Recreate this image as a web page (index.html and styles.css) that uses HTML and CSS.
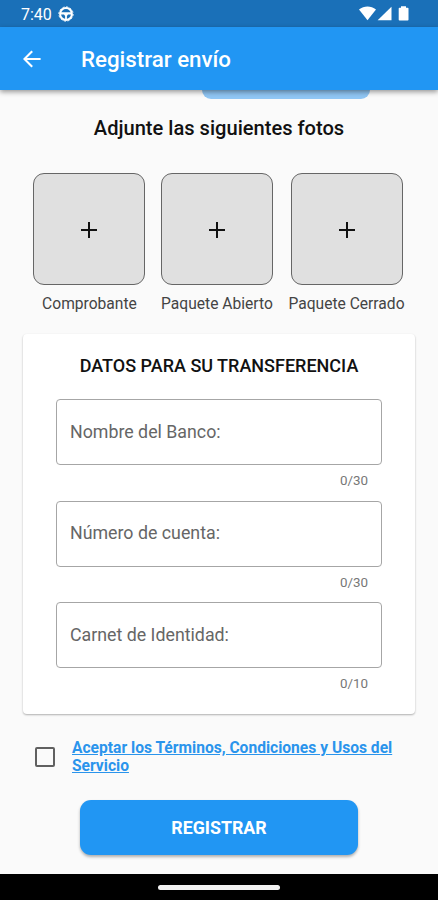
FILE: index.html
```html
<!DOCTYPE html>
<html lang="es">
<head>
    <meta charset="UTF-8">
    <meta name="viewport" content="width=device-width, initial-scale=1.0">
    <title>Registrar envío</title>
    <link rel="stylesheet" href="styles.css">
</head>
<body>
    <div class="status-bar">
        <span class="time">7:40</span>
        <svg class="wheel" width="16" height="16" viewBox="0 0 16 16">
            <circle cx="8" cy="8" r="5.9" fill="none" stroke="#fff" stroke-width="2"/>
            <circle cx="8" cy="8" r="7.1" fill="none" stroke="#fff" stroke-width="1" stroke-dasharray="2.2 1.5"/>
            <path d="M2.5 6.3h11v2.2H10L8.9 10v3.5H7.1V10L6 8.5H2.5z" fill="#fff"/>
        </svg>
        <svg class="signals" width="50" height="16" viewBox="0 0 50 16">
            <path d="M0 3.6C5-.4 12-.4 17 3.6L8.5 14.2z" fill="#fff"/>
            <path d="M32.5.7v13.5H18.6z" fill="#fff"/>
            <path d="M42 .2h5v1.6h1.7q.8 0 .8.8v11.2q0 .8-.8.8h-8.2q-.8 0-.8-.8V2.6q0-.8.8-.8H42z" fill="#fff"/>
        </svg>
    </div>

    <header class="app-bar">
        <svg class="back" width="18" height="18" viewBox="0 0 18 18">
            <path d="M17.6 9H1.8M9.2 1.2L1.4 9l7.8 7.8" fill="none" stroke="#fff" stroke-width="2.1"/>
        </svg>
        <h1>Registrar envío</h1>
    </header>

    <main>
        <div class="previous-button"></div>
        <h2 class="photos-title">Adjunte las siguientes fotos</h2>

        <div class="photos">
            <div class="photo">
                <button class="photo-box"><svg width="16" height="16" viewBox="0 0 16 16"><path d="M0 8h16M8 0v16" stroke="#111" stroke-width="2"/></svg></button>
                <span>Comprobante</span>
            </div>
            <div class="photo">
                <button class="photo-box"><svg width="16" height="16" viewBox="0 0 16 16"><path d="M0 8h16M8 0v16" stroke="#111" stroke-width="2"/></svg></button>
                <span>Paquete Abierto</span>
            </div>
            <div class="photo">
                <button class="photo-box"><svg width="16" height="16" viewBox="0 0 16 16"><path d="M0 8h16M8 0v16" stroke="#111" stroke-width="2"/></svg></button>
                <span>Paquete Cerrado</span>
            </div>
        </div>

        <section class="card">
            <h2>DATOS PARA SU TRANSFERENCIA</h2>
            <div class="field">
                <input type="text" maxlength="30" placeholder="Nombre del Banco:">
                <span class="counter">0/30</span>
            </div>
            <div class="field">
                <input type="text" maxlength="30" placeholder="Número de cuenta:">
                <span class="counter">0/30</span>
            </div>
            <div class="field">
                <input type="text" maxlength="10" placeholder="Carnet de Identidad:">
                <span class="counter">0/10</span>
            </div>
        </section>

        <div class="terms">
            <input type="checkbox" class="checkbox">
            <a href="#">Aceptar los Términos, Condiciones y Usos del Servicio</a>
        </div>

        <button class="submit">REGISTRAR</button>
    </main>

    <div class="nav-bar"><div class="handle"></div></div>
</body>
</html>
```
FILE: styles.css
```css
* {
    box-sizing: border-box;
}
body {
    margin: 0;
    height: 900px;
    display: flex;
    flex-direction: column;
    overflow: hidden;
    background-color: #fafafa;
    color: #111;
    font-family: Roboto, sans-serif;
}
h1, h2 {
    margin: 0;
    font-weight: 500;
}
.status-bar {
    height: 27px;
    flex: none;
    display: flex;
    align-items: center;
    padding: 1px 29px 0 21px;
    background-color: #1a70b8;
    color: #fff;
}
.time {
    font-size: 16px;
    line-height: 20px;
    width: 37px;
    padding-top: 1px;
}
.signals {
    margin-left: auto;
}
.app-bar {
    height: 63px;
    flex: none;
    display: flex;
    align-items: center;
    padding-left: 23px;
    background-color: #2196f3;
    color: #fff;
    box-shadow: 0 2px 5px rgba(0, 0, 0, 0.4);
    z-index: 1;
}
.app-bar h1 {
    margin: 1px 0 0 40px;
    font-size: 22.3px;
}
main {
    flex: 1;
    display: flex;
    flex-direction: column;
}
.previous-button {
    width: 168px;
    height: 9px;
    margin-left: 202px;
    border-radius: 0 0 9px 9px;
    background-color: #90c6f4;
}
.photos-title {
    margin-top: 16px;
    font-size: 20.1px;
    line-height: 26px;
    text-align: center;
}
.photos {
    display: flex;
    justify-content: center;
    gap: 15.5px;
    margin-top: 32px;
}
.photo {
    display: flex;
    flex-direction: column;
    align-items: center;
    font-size: 15.6px;
    color: #444;
}
.photo span {
    margin-top: 9px;
    line-height: 20px;
}
.photo-box {
    width: 112px;
    height: 112px;
    padding: 1px 0 0;
    display: flex;
    align-items: center;
    justify-content: center;
    border: 1px solid #666;
    border-radius: 11px;
    background-color: #e0e0e0;
}
.card {
    height: 380px;
    margin: 20px 23px 0;
    padding: 21px 33px 0;
    border-radius: 4px;
    background-color: #fff;
    box-shadow: 0 1px 2px rgba(0, 0, 0, 0.3);
}
.card h2 {
    margin-bottom: 23px;
    font-size: 18px;
    line-height: 21px;
    text-align: center;
}
.field {
    height: 101.5px;
}
.field input {
    display: block;
    width: 100%;
    height: 66px;
    padding: 0 13px 2px;
    border: 1px solid #a6a6a6;
    border-radius: 4px;
    background: none;
    font-family: inherit;
    font-size: 17.8px;
}
.field input::placeholder {
    color: #666;
}
.counter {
    display: block;
    margin: 8.4px 14px 0 0;
    font-size: 13.4px;
    line-height: 16px;
    text-align: right;
    color: #777;
}
.terms {
    display: flex;
    align-items: center;
    margin-top: 25px;
    padding-left: 35px;
}
.checkbox {
    appearance: none;
    flex: none;
    width: 20px;
    height: 20px;
    margin: 0 17px 0 0;
    border: 2px solid #606060;
    border-radius: 2px;
}
.terms a {
    width: 325px;
    font-size: 15.6px;
    font-weight: 700;
    line-height: 18px;
    color: #2a94ec;
}
.submit {
    width: 278px;
    height: 55px;
    margin: 25px auto 0 80px;
    border: none;
    border-radius: 11px;
    background-color: #2196f3;
    box-shadow: 0 2px 3px rgba(0, 0, 0, 0.3);
    color: #fff;
    font-family: inherit;
    font-size: 17.8px;
    font-weight: 700;
}
.nav-bar {
    height: 26px;
    flex: none;
    display: flex;
    align-items: center;
    justify-content: center;
    background-color: #000;
}
.handle {
    width: 122px;
    height: 5px;
    border-radius: 3px;
    background-color: #f2f2f2;
}
```
